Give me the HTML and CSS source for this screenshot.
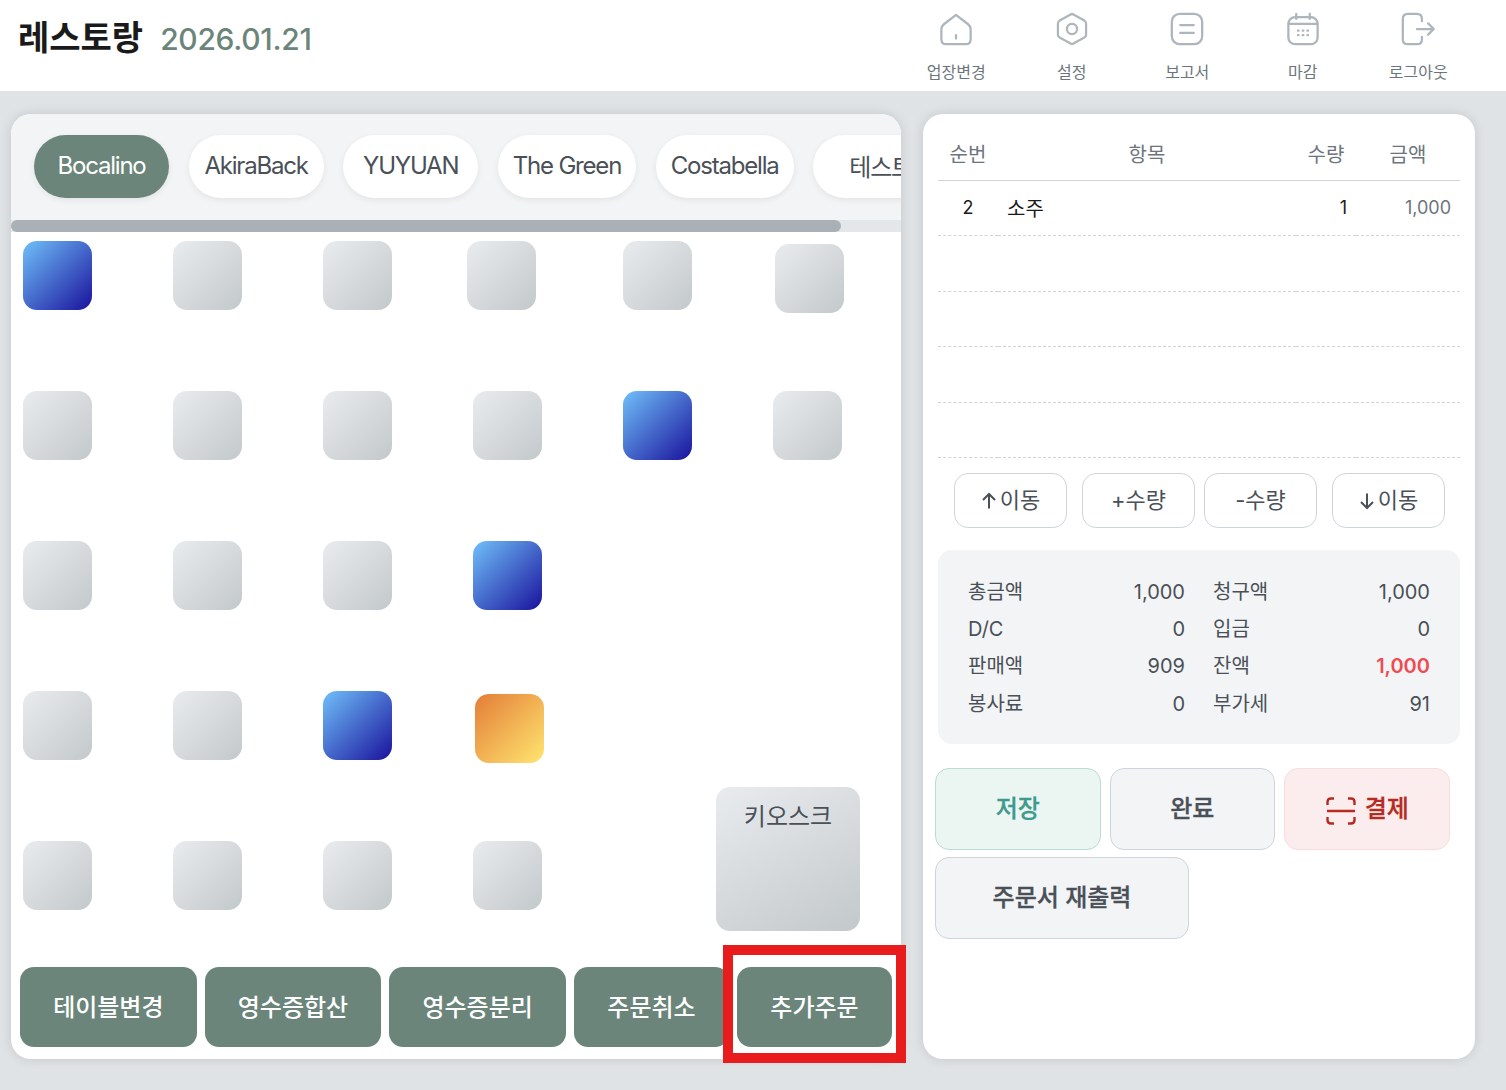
FILE: index.html
```html
<!DOCTYPE html>
<html lang="ko">
  <head>
    <meta charset="utf-8">
    <link rel="stylesheet" href="styles.css">
    <title>레스토랑</title>
  </head>
  <body>
    <header class="topbar">
      <div class="brand">
        <h1>레스토랑</h1>
        <span class="date">2026.01.21</span>
      </div>
      <nav class="topnav">
        <a class="topnav-item">
          <svg viewBox="0 0 32 32"><path d="M16 3.5 L27 12 Q29 13.6 29 16 V25 Q29 29.5 24.5 29.5 H7.5 Q3 29.5 3 25 V16 Q3 13.6 5 12 Z"/><path d="M16 21.5 V24.5"/></svg>
          <span>업장변경</span>
        </a>
        <a class="topnav-item">
          <svg viewBox="0 0 32 32"><path d="M16 2.5 L27 8.5 Q28.5 9.5 28.5 11 V21 Q28.5 22.5 27 23.5 L16 29.5 L5 23.5 Q3.5 22.5 3.5 21 V11 Q3.5 9.5 5 8.5 Z"/><circle cx="16" cy="16" r="4.5"/></svg>
          <span>설정</span>
        </a>
        <a class="topnav-item">
          <svg viewBox="0 0 32 32"><rect x="2.5" y="2.5" width="27" height="27" rx="7"/><path d="M10 12.5 H22 M10 19.5 H22"/></svg>
          <span>보고서</span>
        </a>
        <a class="topnav-item">
          <svg viewBox="0 0 32 32"><rect x="3" y="5.5" width="26" height="24" rx="6"/><path d="M3 11.5 H29 M10 2.5 V7 M22 2.5 V7"/><path class="dots" d="M11.5 17.5 h.6 M15.7 17.5 h.6 M19.9 17.5 h.6 M11.5 21.5 h.6 M15.7 21.5 h.6 M19.9 21.5 h.6"/></svg>
          <span>마감</span>
        </a>
        <a class="topnav-item">
          <svg viewBox="0 0 32 32"><path d="M19.5 9 V7 Q19.5 2.5 15 2.5 H7 Q2.5 2.5 2.5 7 V25 Q2.5 29.5 7 29.5 H15 Q19.5 29.5 19.5 25 V23"/><path d="M15 16 H29.5 M25 11 L30 16 L25 21"/></svg>
          <span>로그아웃</span>
        </a>
      </nav>
    </header>

    <main class="layout">
      <section class="floor-panel">
        <div class="tabs">
          <button class="tab tab-active">Bocalino</button>
          <button class="tab">AkiraBack</button>
          <button class="tab">YUYUAN</button>
          <button class="tab">The Green</button>
          <button class="tab">Costabella</button>
          <button class="tab">테스트</button>
        </div>
        <div class="scrollbar"><div class="scrollbar-thumb"></div></div>

        <div class="floor">
          <div class="floor-row">
            <div class="table-tile busy"></div>
            <div class="table-tile"></div>
            <div class="table-tile"></div>
            <div class="table-tile nudge-left"></div>
            <div class="table-tile"></div>
            <div class="table-tile nudge-down"></div>
          </div>
          <div class="floor-row">
            <div class="table-tile"></div>
            <div class="table-tile"></div>
            <div class="table-tile"></div>
            <div class="table-tile"></div>
            <div class="table-tile busy"></div>
            <div class="table-tile"></div>
          </div>
          <div class="floor-row">
            <div class="table-tile"></div>
            <div class="table-tile"></div>
            <div class="table-tile"></div>
            <div class="table-tile busy"></div>
          </div>
          <div class="floor-row">
            <div class="table-tile"></div>
            <div class="table-tile"></div>
            <div class="table-tile busy"></div>
            <div class="table-tile paid nudge-down"></div>
          </div>
          <div class="floor-row">
            <div class="table-tile"></div>
            <div class="table-tile"></div>
            <div class="table-tile"></div>
            <div class="table-tile"></div>
          </div>
          <div class="kiosk">키오스크</div>
        </div>

        <div class="floor-actions">
          <button class="action wide">테이블변경</button>
          <button class="action wide">영수증합산</button>
          <button class="action wide">영수증분리</button>
          <button class="action">주문취소</button>
          <button class="action">추가주문</button>
        </div>
        <div class="highlight"></div>
      </section>

      <section class="order-panel">
        <table class="order-table">
          <thead>
            <tr>
              <th class="col-no">순번</th>
              <th>항목</th>
              <th class="col-qty">수량</th>
              <th class="col-price">금액</th>
            </tr>
          </thead>
          <tbody>
            <tr>
              <td class="cell-no">2</td>
              <td>소주</td>
              <td class="cell-qty">1</td>
              <td class="cell-price">1,000</td>
            </tr>
            <tr><td></td><td></td><td></td><td></td></tr>
            <tr><td></td><td></td><td></td><td></td></tr>
            <tr><td></td><td></td><td></td><td></td></tr>
            <tr><td></td><td></td><td></td><td></td></tr>
          </tbody>
        </table>

        <div class="line-tools">
          <div class="tool-group">
            <button class="tool"><svg viewBox="0 0 16 18"><path d="M8 16.5 V2 M2 8 L8 2 L14 8"/></svg>이동</button>
            <button class="tool">+수량</button>
          </div>
          <div class="tool-group">
            <button class="tool">-수량</button>
            <button class="tool"><svg viewBox="0 0 16 18"><path d="M8 1.5 V16 M2 10 L8 16 L14 10"/></svg>이동</button>
          </div>
        </div>

        <div class="summary">
          <div class="summary-cell"><span>총금액</span><span>1,000</span></div>
          <div class="summary-cell"><span>청구액</span><span>1,000</span></div>
          <div class="summary-cell"><span>D/C</span><span>0</span></div>
          <div class="summary-cell"><span>입금</span><span>0</span></div>
          <div class="summary-cell"><span>판매액</span><span>909</span></div>
          <div class="summary-cell"><span>잔액</span><span class="due">1,000</span></div>
          <div class="summary-cell"><span>봉사료</span><span>0</span></div>
          <div class="summary-cell"><span>부가세</span><span>91</span></div>
        </div>

        <div class="order-actions">
          <button class="big-btn save">저장</button>
          <button class="big-btn">완료</button>
          <button class="big-btn pay">
            <svg viewBox="0 0 30 28"><path d="M1.5 8 V5 Q1.5 1.5 5 1.5 H8 M22 1.5 H25 Q28.5 1.5 28.5 5 V8 M1.5 20 V23 Q1.5 26.5 5 26.5 H8 M22 26.5 H25 Q28.5 26.5 28.5 23 V20 M1 14 H29"/></svg>
            결제
          </button>
          <button class="big-btn reprint">주문서 재출력</button>
        </div>
      </section>
    </main>
  </body>
</html>
```

FILE: styles.css
```css
* {
  box-sizing: border-box;
}

html, body {
  height: 100%;
}

body {
  margin: 0;
  background-color: #dfe3e6;
  color: #495057;
  font-family: Inter, "Noto Sans CJK KR", sans-serif;
  overflow: hidden;
}

button {
  font-family: inherit;
  cursor: pointer;
}

/* header */
.topbar {
  height: 91px;
  background-color: #fff;
  display: flex;
  justify-content: space-between;
}

.brand {
  display: flex;
  align-items: baseline;
  gap: 17px;
  padding: 16px 0 0 18px;
}

.brand h1 {
  margin: 0;
  font-size: 34px;
  font-weight: 600;
  line-height: 44px;
  color: #1a1a1a;
}

.date {
  font-size: 30px;
  font-weight: 500;
  letter-spacing: -0.3px;
  color: #6b857a;
}

.topnav {
  display: flex;
  padding: 11px 30px 0 0;
}

.topnav-item {
  width: 115.5px;
  display: flex;
  flex-direction: column;
  align-items: center;
  font-size: 16px;
  color: #6c757d;
}

.topnav-item svg {
  width: 36px;
  height: 36px;
  margin-bottom: 12px;
  fill: none;
  stroke: #adb5bd;
  stroke-width: 2;
  stroke-linecap: round;
  stroke-linejoin: round;
}

.topnav-item .dots {
  stroke-width: 2;
}

/* panels */
.layout {
  display: flex;
  gap: 22px;
  padding: 23px 0 0 11px;
}

.floor-panel,
.order-panel {
  height: 945px;
  background-color: #fff;
  border-radius: 20px;
  box-shadow: 0 0 12px rgba(0, 0, 0, 0.12);
}

.floor-panel {
  width: 890px;
  position: relative;
}

.order-panel {
  width: 552px;
  padding-top: 13px;
}

/* tabs */
.tabs {
  height: 106px;
  padding: 21px 0 0 23px;
  display: flex;
  gap: 19.6px;
  background-color: #f3f4f6;
  border-radius: 20px 20px 0 0;
  overflow: hidden;
}

.tab {
  flex: none;
  min-width: 135px;
  height: 63px;
  padding: 0 15px 2px;
  border: 0;
  border-radius: 32px;
  background-color: #fff;
  color: #495057;
  font-size: 24px;
  letter-spacing: -1.2px;
  box-shadow: 0 2px 6px rgba(0, 0, 0, 0.07);
}

.tab-active {
  background-color: #6b857a;
  color: #fff;
}

.scrollbar {
  height: 12px;
  background-color: #e3e7e9;
}

.scrollbar-thumb {
  width: 830px;
  height: 12px;
  border-radius: 6px;
  background-color: #aab1b6;
}

/* floor plan */
.floor {
  position: relative;
  height: 735px;
  padding: 9px 0 0 12px;
  display: flex;
  flex-direction: column;
  gap: 81px;
}

.floor-row {
  display: flex;
  gap: 81px;
}

.table-tile {
  width: 69px;
  height: 69px;
  border-radius: 14px;
  background: linear-gradient(135deg, #e9ecef, #c3c8cb);
}

.table-tile.busy {
  background: linear-gradient(135deg, #70c0fa, #1a129c);
}

.table-tile.paid {
  background: linear-gradient(135deg, #e47d37, #ffe670);
}

.nudge-left {
  transform: translateX(-6px);
}

.nudge-down {
  transform: translate(2px, 3px);
}

.kiosk {
  position: absolute;
  left: 705px;
  top: 555px;
  width: 144px;
  height: 144px;
  padding-top: 13px;
  border-radius: 14px;
  background: linear-gradient(150deg, #e9ecef, #c3c8cb);
  font-size: 24px;
  line-height: 34px;
  text-align: center;
}

.floor-actions {
  display: flex;
  gap: 8px;
  padding-left: 9px;
}

.action {
  width: 155px;
  height: 80px;
  padding: 0 0 4px;
  border: 0;
  border-radius: 14px;
  background-color: #6b857a;
  color: #fff;
  font-size: 24px;
  font-weight: 500;
}

.action.wide {
  width: 176.67px;
}

.highlight {
  position: absolute;
  left: 712px;
  top: 831px;
  width: 183px;
  height: 118px;
  border: 10px solid #e81c1c;
}

/* order table */
.order-table {
  width: 522px;
  margin-left: 15px;
  border-collapse: collapse;
  table-layout: fixed;
  font-size: 20px;
}

.order-table th {
  height: 53px;
  font-weight: 400;
  color: #6c757d;
  border-bottom: 1px solid #ced4da;
}

.order-table td {
  height: 55.5px;
  padding: 0 9px;
  color: #1a1a1a;
  border-bottom: 1px dashed #ced4da;
}

.col-no {
  width: 60px;
}

.col-qty {
  width: 60px;
}

.col-price {
  width: 104px;
}

.order-table .cell-no {
  text-align: center;
  font-size: 18px;
}

.order-table .cell-qty {
  text-align: right;
  font-size: 18px;
}

.order-table .cell-price {
  text-align: right;
  font-size: 18px;
  color: #6c757d;
}

/* small buttons */
.line-tools {
  display: flex;
  gap: 9px;
  padding: 15px 0 0 31px;
}

.tool-group {
  display: flex;
  gap: 15px;
}

.tool {
  width: 113px;
  height: 55px;
  padding: 0 0 5px;
  border: 1px solid #ced4da;
  border-radius: 14px;
  background-color: #fff;
  color: #495057;
  font-size: 22px;
  display: flex;
  align-items: center;
  justify-content: center;
}

.tool svg {
  width: 16px;
  height: 18px;
  margin: 5px 3px 0 0;
  fill: none;
  stroke: #495057;
  stroke-width: 2;
}

/* totals */
.summary {
  width: 522px;
  height: 194px;
  margin: 22px 0 0 15px;
  padding: 24px 30px 0;
  border-radius: 14px;
  background-color: #f3f4f6;
  display: grid;
  grid-template-columns: 217px 217px;
  grid-auto-rows: 37.2px;
  column-gap: 28px;
}

.summary-cell {
  display: flex;
  justify-content: space-between;
  font-size: 20px;
  line-height: 37px;
}

.summary-cell .due {
  color: #ef4b52;
  font-weight: 600;
}

/* main buttons */
.order-actions {
  width: 522px;
  margin: 24px 0 0 12px;
  display: flex;
  flex-wrap: wrap;
  gap: 7px 9px;
}

.big-btn {
  width: 165.5px;
  height: 82px;
  padding: 0 0 6px;
  border: 1px solid #ced4da;
  border-radius: 14px;
  background-color: #f3f4f6;
  color: #495057;
  font-size: 24px;
  font-weight: 500;
  -webkit-text-stroke: 0.3px;
  display: flex;
  align-items: center;
  justify-content: center;
}

.big-btn.save {
  border-color: #b9dcd4;
  background-color: #ebf6f3;
  color: #3f9a8e;
}

.big-btn.pay {
  border-color: #fadcdc;
  background-color: #fbeded;
  color: #b52b22;
}

.big-btn.pay svg {
  width: 30px;
  height: 28px;
  margin: 10px 9px 0 1px;
  fill: none;
  stroke: #b52b22;
  stroke-width: 2.4;
}

.big-btn.reprint {
  width: 254px;
}
```
